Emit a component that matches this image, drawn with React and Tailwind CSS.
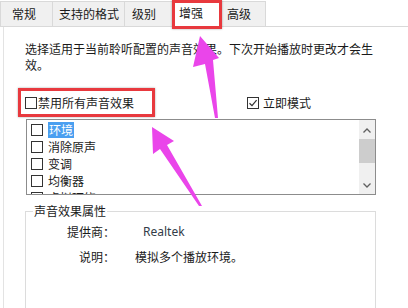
import React from "react";

const font = { fontFamily: '"Noto Sans CJK SC", "Noto Sans", sans-serif' };

function Box({ checked }) {
  return (
    <span className="flex h-[12px] w-[12px] shrink-0 items-center justify-center border border-[#333] bg-white">
      {checked && (
        <svg width="10" height="10" viewBox="0 0 10 10">
          <path d="M1.5 5.2 L4 7.6 L8.6 2.2" fill="none" stroke="#333" strokeWidth="1.2" />
        </svg>
      )}
    </span>
  );
}

function Tab({ label, w, pl, selected }) {
  return (
    <div
      className={
        selected
          ? "-mb-px flex h-[28px] items-start justify-start border-x border-t border-[#d9d9d9] bg-white pt-[5px]"
          : "flex h-[25px] items-center justify-start border-l border-t border-[#d9d9d9] bg-[#f0f0f0]"
      }
      style={{ width: w, paddingLeft: pl }}
    >
      <span className="text-[12px] leading-[16px] text-[#1a1a1a]">{label}</span>
    </div>
  );
}

export default function App() {
  const items = ["环境", "消除原声", "变调", "均衡器", "虚拟环绕"];
  return (
    <div className="relative h-[308px] w-[408px] overflow-hidden bg-white text-[#1a1a1a]" style={font}>
      {/* tab strip */}
      <div className="flex h-[27px] items-end border-b border-[#d9d9d9] bg-white">
        <Tab label="常规" w={52} pl={11} />
        <Tab label="支持的格式" w={72} pl={6} />
        <Tab label="级别" w={48} pl={7} />
        <Tab label="增强" w={50} pl={6} selected />
        <div className="flex h-[25px] w-[44px] items-center border-r border-t border-[#d9d9d9] bg-[#f0f0f0] pl-[5px]">
          <span className="text-[12px] leading-[16px]">高级</span>
        </div>
      </div>

      {/* panel */}
      <div className="ml-[3px] h-[281px] border-l border-[#e3e3e3] pl-[21px]">
        <p className="pt-[14px] text-[12px] leading-[16px]">
          选择适用于当前聆听配置的声音效果。下次开始播放时更改才会生
          <br />
          效。
        </p>

        <div className="mt-[22px] flex w-[351px] items-center justify-between text-[12px] leading-[16px]">
          <label className="flex items-center gap-px">
            <Box />
            <span>禁用所有声音效果</span>
          </label>
          <label className="mr-[65px] flex items-center gap-[4px]">
            <Box checked />
            <span>立即模式</span>
          </label>
        </div>

        {/* list box */}
        <div className="mt-[8px] ml-[1px] flex h-[76px] w-[350px] overflow-hidden border border-[#8c8c8c]">
          <div className="h-[74px] flex-1 overflow-hidden pl-[4px] pt-[1px]">
            {items.map((t, i) => (
              <div key={t} className="flex h-[17px] items-center gap-[5px] text-[12px] leading-[16px]">
                <Box />
                <span className={i === 0 ? "bg-[#4a9ff0] px-[1px] text-white" : ""}>{t}</span>
              </div>
            ))}
          </div>
          <div className="flex w-[16px] flex-col items-center bg-[#f0f0f0]">
            <svg width="16" height="16" viewBox="0 0 16 16" className="mt-[3px]">
              <path d="M4.5 9.5 L8 6 L11.5 9.5" fill="none" stroke="#606060" strokeWidth="1.3" />
            </svg>
            <div className="h-[24px] w-[16px] bg-[#cdcdcd]" />
            <div className="flex-1" />
            <svg width="16" height="16" viewBox="0 0 16 16" className="mb-[1px]">
              <path d="M4.5 6.5 L8 10 L11.5 6.5" fill="none" stroke="#606060" strokeWidth="1.3" />
            </svg>
          </div>
        </div>

        {/* group box */}
        <fieldset className="mt-[8px] h-[110px] w-[351px] border border-[#dcdcdc] pl-[7px]">
          <legend className="bg-white px-[1px] text-[12px] leading-[16px]">声音效果属性</legend>
          <div className="mt-[5px] grid grid-cols-[82px_1fr] gap-y-[9px] text-[12px] leading-[16px]">
            <span className="text-right">提供商：</span>
            <span className="pl-[28px] text-[#333c48]" style={{ fontFamily: '"Noto Sans", sans-serif', fontSize: 12 }}>Realtek</span>
            <span className="text-right">说明：</span>
            <span className="pl-[20px]">模拟多个播放环境。</span>
          </div>
        </fieldset>
      </div>

      {/* annotations */}
      <div className="pointer-events-none absolute left-[172px] top-0 h-[29px] w-[50px] border-[3px] border-[#e8393e] shadow-[0_0_2px_rgba(0,0,0,0.35)]" />
      <div className="pointer-events-none absolute left-[18px] top-[88px] h-[29px] w-[137px] border-[3px] border-[#e8393e] shadow-[0_0_2px_rgba(0,0,0,0.35)]" />
      <svg className="pointer-events-none absolute left-0 top-0" width="408" height="308" viewBox="0 0 408 308">
        <polygon points="200,36 219,58 213,60 218,118 215,118 205,64 193,67" fill="#ea45ea" />
        <polygon points="152,127 174,141 167,145 202,206 199,206 160,149 153,154" fill="#ea45ea" />
      </svg>
    </div>
  );
}
